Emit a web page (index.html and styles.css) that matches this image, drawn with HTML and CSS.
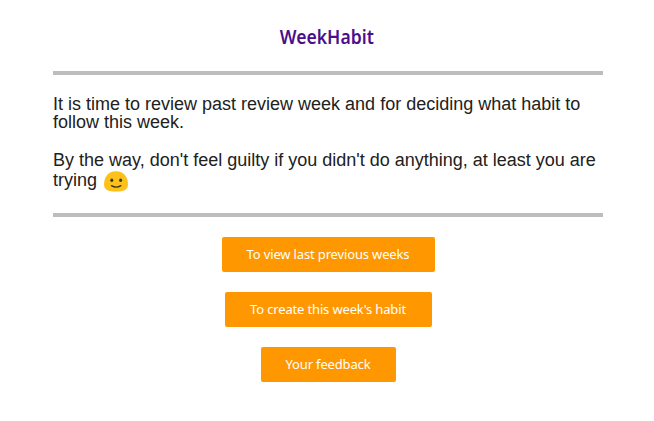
FILE: index.html
```html
<!DOCTYPE html>
<html lang="en">
<head>
<meta charset="utf-8">
<title>WeekHabit</title>
<link rel="stylesheet" href="styles.css">
</head>
<body>
<main class="mail">
  <h1 class="logo"><span class="wordmark">WeekHabit</span></h1>
  <section class="message">
    <p class="line first">It is time to review past review week and for deciding what habit to<br>follow this week.</p>
    <p class="line">By the way, don't feel guilty if you didn't do anything, at least you are<br>trying <svg class="emoji" viewBox="0 0 24 21"><path fill="#fcc21b" d="M12 .2C4 .2 0 6.500 0 13.500 0 18.800 4 20.500 12 20.500S24 18.800 24 13.500C24 6.500 20 .2 12 .2Z"/><ellipse cx="7.800" cy="9.300" rx="1.500" ry="1.800" fill="#3b3420"/><ellipse cx="16.600" cy="9.300" rx="1.500" ry="1.800" fill="#3b3420"/><path d="M7.500 14.600Q12.200 17.800 16.900 14.600" fill="none" stroke="#3b3420" stroke-width="1.300" stroke-linecap="round"/></svg></p>
  </section>
  <nav class="actions">
    <a class="button previous"><span>To view last previous weeks</span></a>
    <a class="button create"><span>To create this week's habit</span></a>
    <a class="button feedback"><span>Your feedback</span></a>
  </nav>
</main>
</body>
</html>
```
FILE: styles.css
```css
body { margin: 0; background: #fff; }
.mail { width: 550px; margin-left: 53px; }
.logo { height: 71px; margin: 0; padding-top: 25px; box-sizing: border-box; text-align: center; font: 600 19px/24px "Noto Sans", sans-serif; color: #4b0f8c; }
.wordmark { display: inline-block; transform: translateX(-1px) scaleX(.925); }
.message { box-sizing: border-box; height: 146px; border: solid #bdbdbd; border-width: 4px 0; padding-top: 20px; font: 18px/19px "Liberation Sans", sans-serif; color: #212121; white-space: nowrap; }
.line { margin: 0; }
.first { margin-bottom: 20px; line-height: 18px; }
.emoji { width: 24px; height: 21px; margin: 1px 0 0 2px; vertical-align: -6px; }
.actions { display: flex; flex-direction: column; align-items: center; gap: 20px; padding-top: 20px; }
.button { box-sizing: border-box; display: flex; align-items: center; justify-content: center; height: 35px; padding-bottom: 2px; border-radius: 2px; background: #ff9800; color: #fff; font: 13px "Noto Sans", sans-serif; letter-spacing: -.15px; white-space: nowrap; }
.previous { width: 213px; }
.create { width: 207px; }
.feedback { width: 135px; }
```
